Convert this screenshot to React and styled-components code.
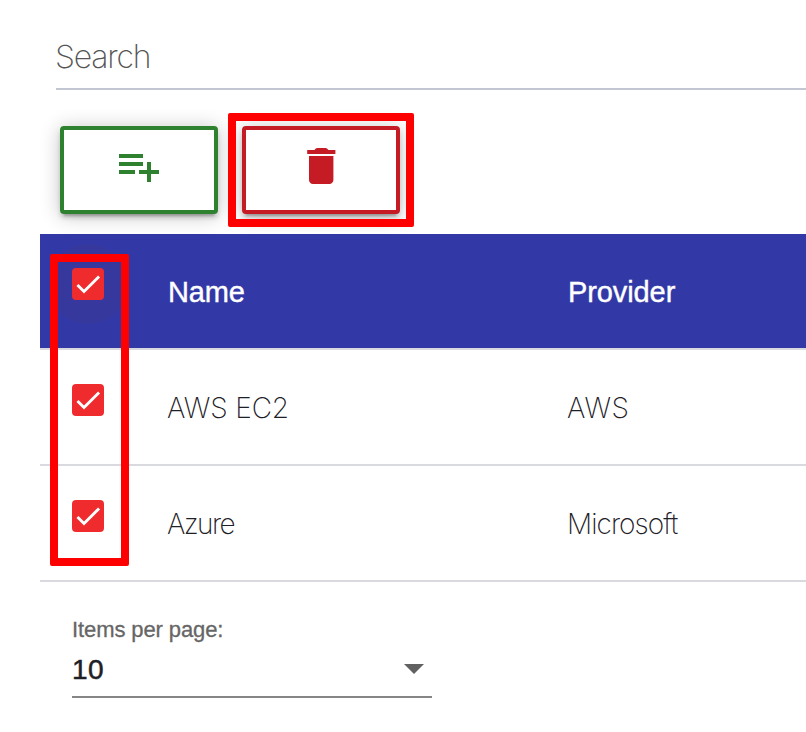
import React from "react";
import styled, { createGlobalStyle } from "styled-components";

const GlobalStyle = createGlobalStyle`
  *, *::before, *::after { box-sizing: border-box; }
  body { margin: 0; background: #fff; overflow: hidden; }
`;

const Page = styled.main`
  position: relative;
  width: 806px;
  height: 732px;
  overflow: hidden;
  background: #fff;
  color: #1d2026;
  font-family: "Liberation Sans", Arial, sans-serif;
`;

const SearchField = styled.div`
  display: flex;
  align-items: center;
  height: 90px;
  margin-left: 56px;
  padding-top: 26px;
  border-bottom: 2px solid #c3c7d3;
`;

const Text = styled.span`
  display: inline-block;
  white-space: nowrap;
  line-height: 36px;
  font-family: ${(p) => (p.$light ? 'Inter, "Liberation Sans", sans-serif' : "inherit")};
  font-weight: ${(p) => (p.$light ? 250 : 400)};
  font-size: ${(p) => p.$size || 28}px;
  letter-spacing: ${(p) => p.$track || 0}px;
  color: ${(p) => p.$color || "inherit"};
  -webkit-text-stroke: ${(p) => p.$stroke || 0}px currentColor;
`;

const SearchLabel = styled(Text)`
  margin-left: -1px;
`;

const Toolbar = styled.div`
  display: flex;
  gap: 24px;
  height: 144px;
  padding: 36px 0 0 60px;
`;

const ActionButton = styled.button`
  display: flex;
  justify-content: center;
  width: 158px;
  height: 88px;
  padding: 12px 0 0;
  color: ${(p) => p.$color};
  background: #fff;
  border: 4px solid currentColor;
  border-radius: 4px;
  box-shadow: 0 6px 2px -4px rgba(0, 0, 0, 0.2), 0 4px 4px rgba(0, 0, 0, 0.14),
    0 2px 20px rgba(0, 0, 0, 0.24);
`;

const Icon = styled.svg`
  display: block;
  width: 48px;
  height: 48px;
  fill: currentColor;
`;

const Table = styled.div`
  margin-left: 40px;
`;

const Row = styled.div`
  display: grid;
  grid-template-columns: ${(p) => (p.$header ? 128 : 127)}px 400px 1fr;
  height: 116px;
  border-bottom: 2px solid #d8dadf;
  background: ${(p) => (p.$header ? "#3239a6" : "#fff")};
  color: ${(p) => (p.$header ? "#fff" : "#1d2026")};
`;

const Cell = styled.div`
  padding-top: 40px;
`;

const CheckCell = styled.div`
  padding: 34px 0 0 32px;
`;

const Checkbox = styled.span`
  display: block;
  width: 32px;
  height: 32px;
  border-radius: 4px;
  background: #f02b2d;
`;

const Ripple = styled.span`
  display: grid;
  place-items: center;
  width: 80px;
  height: 80px;
  margin: -24px;
  border-radius: 50%;
  background: ${(p) => (p.$active ? "rgba(100, 50, 80, 0.09)" : "transparent")};
`;

const Check = styled.svg`
  display: block;
  width: 32px;
  height: 32px;
  fill: none;
  stroke: #fff;
  stroke-width: 2.13;
`;

const Paginator = styled.div`
  display: flex;
  flex-direction: column;
  width: 360px;
  margin: 30px 0 0 72px;
`;

const Select = styled.div`
  display: flex;
  align-items: center;
  justify-content: space-between;
  height: 50px;
  padding: 0 8px 4px 0;
  border-bottom: 2px solid #858585;
`;

const Caret = styled.svg`
  display: block;
  width: 20px;
  height: 10px;
  margin-top: -2px;
  fill: #616161;
`;

const Highlight = styled.div`
  position: absolute;
  left: ${(p) => p.$x}px;
  top: ${(p) => p.$y}px;
  width: ${(p) => p.$w}px;
  height: ${(p) => p.$h}px;
  border: 8px solid #ff0000;
  border-radius: 2px;
  pointer-events: none;
`;

function CheckMark({ active }) {
  return (
    <Ripple $active={active}>
      <Checkbox>
        <Check viewBox="0 0 24 24">
          <path d="M4.1 12.7 9 17.6 20.3 6.3" />
        </Check>
      </Checkbox>
    </Ripple>
  );
}

const rows = [
  { name: "AWS EC2", nameTrack: -0.1, provider: "AWS", providerTrack: 0.6 },
  { name: "Azure", nameTrack: -1.6, provider: "Microsoft", providerTrack: -0.95 },
];

export default function App() {
  return (
    <Page>
      <GlobalStyle />
      <SearchField>
        <SearchLabel $light $size={32} $track={-1.2} $color="#555">Search</SearchLabel>
      </SearchField>
      <Toolbar>
        <ActionButton $color="#2e812f" aria-label="Add item">
          <Icon viewBox="0 0 24 24">
            <path d="M14 10H2v2h12v-2zm0-4H2v2h12V6zm4 8v-4h-2v4h-4v2h4v4h2v-4h4v-2h-4zM2 16h8v-2H2v2z" />
          </Icon>
        </ActionButton>
        <ActionButton $color="#c51b24" aria-label="Delete selected">
          <Icon viewBox="0 0 24 24">
            <path d="M6 19c0 1.1.9 2 2 2h8.2c1.1 0 2-.9 2-2V7H6v12zM19.2 4h-3.5l-.7-.7c-.2-.2-.45-.3-.7-.3h-4.2c-.25 0-.5.1-.7.3l-.7.7H5.1v2h14.1V4z" />
          </Icon>
        </ActionButton>
      </Toolbar>
      <Table>
        <Row $header>
          <CheckCell><CheckMark active /></CheckCell>
          <Cell><Text $size={29} $track={-0.2} $stroke={0.4}>Name</Text></Cell>
          <Cell><Text $size={29} $track={-0.1} $stroke={0.4}>Provider</Text></Cell>
        </Row>
        {rows.map((row) => (
          <Row key={row.name}>
            <CheckCell><CheckMark /></CheckCell>
            <Cell><Text $light $track={row.nameTrack}>{row.name}</Text></Cell>
            <Cell><Text $light $track={row.providerTrack}>{row.provider}</Text></Cell>
          </Row>
        ))}
      </Table>
      <Paginator>
        <Text $size={22} $track={-0.1} $color="#666" $stroke={0.3}>Items per page:</Text>
        <Select>
          <Text $track={0.5} $stroke={0.5}>10</Text>
          <Caret viewBox="0 0 20 10"><path d="M0 0h20L10 10z" /></Caret>
        </Select>
      </Paginator>
      <Highlight $x={228} $y={113} $w={186} $h={114} />
      <Highlight $x={50} $y={254} $w={79} $h={312} />
    </Page>
  );
}
